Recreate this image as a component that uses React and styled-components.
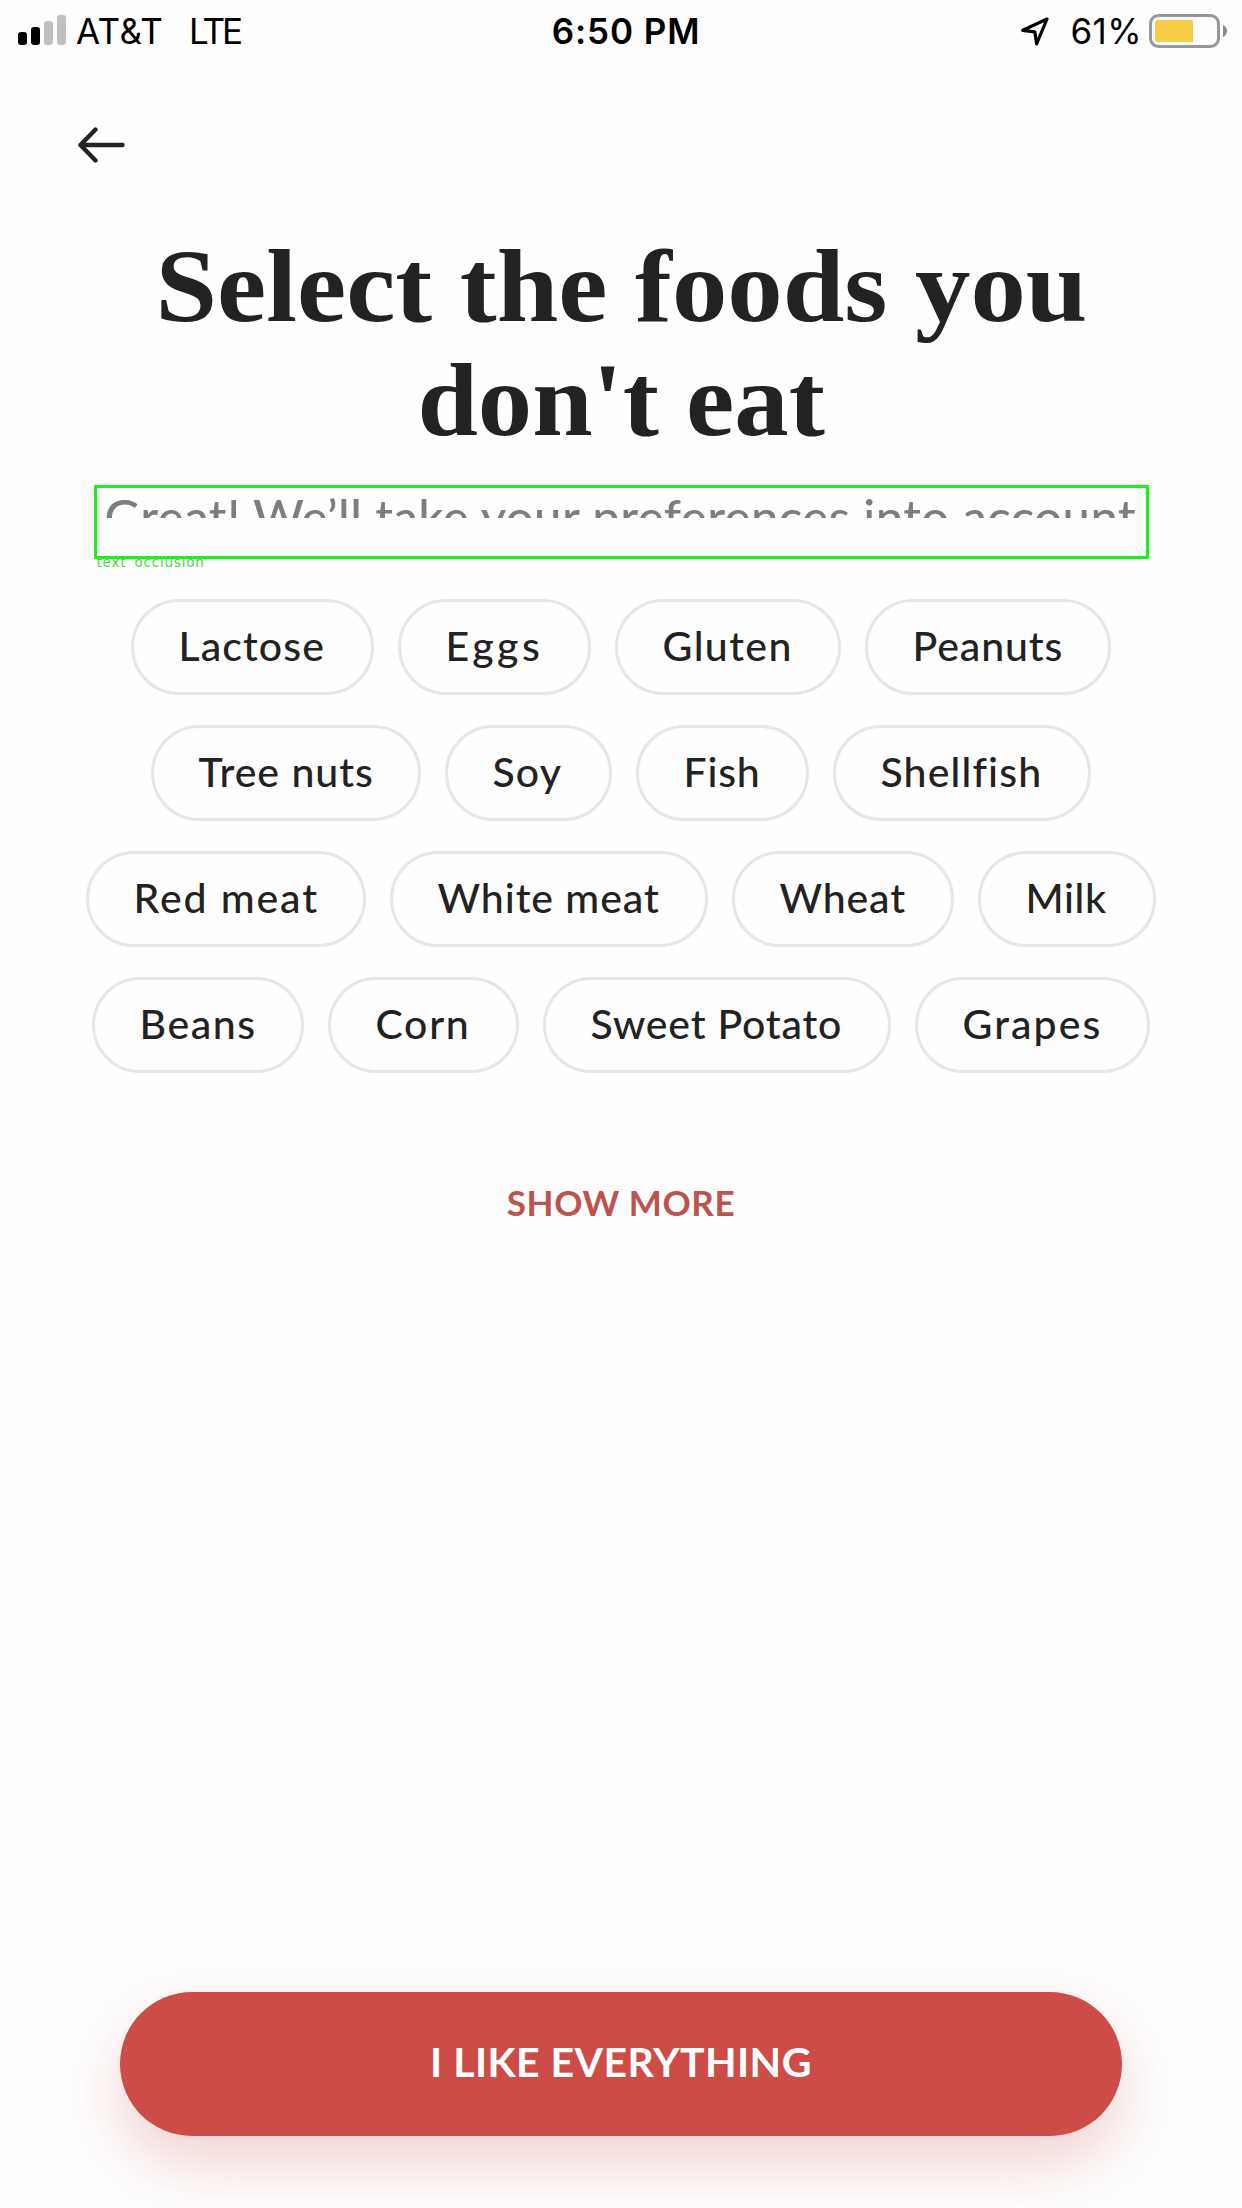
import React from 'react';
import styled, { createGlobalStyle } from 'styled-components';

const GlobalStyle = createGlobalStyle`
  *, *::before, *::after { box-sizing: border-box; }
  body { margin: 0; background: #fefefe; }
`;

const Screen = styled.div`
  display: flex;
  flex-direction: column;
  align-items: stretch;
  width: 1242px;
  height: 2208px;
  overflow: hidden;
  background: #fefefe;
  color: #222;
  font-family: Lato, 'Open Sans', sans-serif;
`;

const StatusBar = styled.header`
  display: grid;
  grid-template-columns: 1fr auto 1fr;
  align-items: center;
  height: 62px;
  padding: 0 15px 0 18px;
  color: #000;
  font: 400 35px/62px Inter, sans-serif;
`;

const StatusGroup = styled.div`
  display: flex;
  align-items: center;
  justify-content: ${(p) => (p.$end ? 'flex-end' : 'flex-start')};
`;

const Signal = styled.div`
  display: flex;
  align-items: flex-end;
  gap: 4px;
  height: 30px;
  margin: 0 10px 2px 0;
`;

const SignalBar = styled.span`
  width: 9px;
  height: ${(p) => p.$height}px;
  border-radius: 3px;
  background: ${(p) => (p.$on ? '#000' : '#bfbfbf')};
`;

const Carrier = styled.span`
  width: 113px;
  letter-spacing: 0.4px;
`;

const Network = styled.span`
  letter-spacing: -3px;
`;

const Clock = styled.time`
  padding-left: 7px;
  font-weight: 600;
  letter-spacing: 0.9px;
`;

const Percent = styled.span`
  margin: 0 7px 0 21px;
  letter-spacing: 0.4px;
`;

const Nav = styled.nav`
  display: flex;
  align-items: center;
  height: 166px;
  padding-left: 77px;
`;

const BackButton = styled.button`
  display: flex;
  padding: 0;
  border: 0;
  background: none;
  color: #222;
`;

const Title = styled.h1`
  display: flex;
  flex-direction: column;
  align-items: center;
  margin: 1px 0 0;
  font: 700 103px/114px 'Liberation Serif', serif;
`;

const TitleLine = styled.span`
  transform: scaleX(${(p) => p.$stretch});
  white-space: nowrap;
`;

const Highlight = styled.div`
  position: relative;
  width: 1055px;
  height: 74px;
  margin: 28px 0 40px 93.5px;
  border: 3px solid #1cf01f;
  border-radius: 1px;
`;

const Subtitle = styled.p`
  height: 30px;
  margin: 0;
  padding-left: 8px;
  overflow: hidden;
  color: #7d7d7d;
  font-size: 49px;
  font-weight: 500;
  line-height: 56px;
  letter-spacing: 0.45px;
  white-space: nowrap;
`;

const Tag = styled.span`
  position: absolute;
  left: 0;
  top: 66px;
  color: #3fdc3f;
  font: 400 13.5px/16px 'DejaVu Sans', sans-serif;
  letter-spacing: 0.8px;
  word-spacing: 3px;
  white-space: nowrap;
`;

const ChipList = styled.div`
  display: flex;
  flex-direction: column;
  align-items: center;
  gap: 30px;
`;

const ChipRow = styled.div`
  display: flex;
  gap: 24px;
`;

const Chip = styled.button`
  width: ${(p) => p.$width}px;
  height: 96px;
  padding: 0 0 3px 44.5px;
  border: 3px solid #e6e6e6;
  border-radius: 48px;
  background: transparent;
  color: #222;
  font: 500 41px/87px Lato, sans-serif;
  letter-spacing: ${(p) => p.$spacing}px;
  text-align: left;
  white-space: nowrap;
`;

const ShowMore = styled.button`
  align-self: center;
  height: 60px;
  margin-top: 99px;
  padding: 0;
  border: 0;
  background: none;
  color: #bd534d;
  font: 700 35px/60px Lato, sans-serif;
  letter-spacing: 0.6px;
`;

const Footer = styled.footer`
  display: flex;
  justify-content: center;
  margin-top: auto;
  padding-bottom: 72px;
`;

const PrimaryButton = styled.button`
  width: 1002px;
  height: 144px;
  padding: 0 0 4px;
  border: 0;
  border-radius: 72px;
  background: #cd4c47;
  box-shadow: 0 27px 60px rgba(205, 76, 71, 0.25);
  color: #fff;
  font: 700 41px/140px Lato, sans-serif;
  letter-spacing: 0.45px;
`;

const signal = [
  { height: 13, on: true },
  { height: 18, on: true },
  { height: 24, on: false },
  { height: 30, on: false },
];

const foods = [
  [['Lactose', 243, 1.1], ['Eggs', 193, 3.6], ['Gluten', 226, 1.4], ['Peanuts', 246, 0.9]],
  [['Tree nuts', 270, 1], ['Soy', 167, 1.15], ['Fish', 173, 0.8], ['Shellfish', 258, 1.15]],
  [['Red meat', 280, 1.9], ['White meat', 318, 0.95], ['Wheat', 222, 0.85], ['Milk', 178, 0.6]],
  [['Beans', 212, 1.6], ['Corn', 191, 1.7], ['Sweet Potato', 348, 0.8], ['Grapes', 235, 2.1]],
];

const LocationIcon = () => (
  <svg width="28" height="29" viewBox="0 0 28 29" fill="none" stroke="#000" strokeWidth="3.2" strokeLinejoin="round">
    <path d="M26 2 L1.8 13.3 L13.8 14.8 L15.6 26.8 Z" />
  </svg>
);

const BatteryIcon = () => (
  <svg width="78" height="34" viewBox="0 0 78 34">
    <rect x="1.5" y="1.5" width="68" height="31" rx="8" fill="none" stroke="#979797" strokeWidth="3" />
    <path d="M8 6 H44 V28 H8 Q6 28 6 25 V9 Q6 6 8 6 Z" fill="#f7cd46" />
    <path d="M74 11 Q78 13 78 17 Q78 21 74 23 Z" fill="#8a8a8a" />
  </svg>
);

const ArrowIcon = () => (
  <svg width="48" height="36" viewBox="0 0 48 36" fill="none" stroke="currentColor" strokeWidth="4.4" strokeLinecap="round" strokeLinejoin="round">
    <path d="M18.5 2.5 L3.5 18 L18.5 33.5 M3.5 18 H45.5" />
  </svg>
);

export default function App() {
  return (
    <Screen>
      <GlobalStyle />
      <StatusBar>
        <StatusGroup>
          <Signal>
            {signal.map((bar) => (
              <SignalBar key={bar.height} $height={bar.height} $on={bar.on} />
            ))}
          </Signal>
          <Carrier>AT&amp;T</Carrier>
          <Network>LTE</Network>
        </StatusGroup>
        <Clock>6:50 PM</Clock>
        <StatusGroup $end>
          <LocationIcon />
          <Percent>61%</Percent>
          <BatteryIcon />
        </StatusGroup>
      </StatusBar>
      <Nav>
        <BackButton aria-label="Back">
          <ArrowIcon />
        </BackButton>
      </Nav>
      <Title>
        <TitleLine $stretch={1.075}>Select the foods you</TitleLine>
        <TitleLine $stretch={1.055}>don't eat</TitleLine>
      </Title>
      <Highlight>
        <Subtitle>Great! We’ll take your preferences into account</Subtitle>
        <Tag>text occlusion</Tag>
      </Highlight>
      <ChipList>
        {foods.map((row) => (
          <ChipRow key={row[0][0]}>
            {row.map(([name, width, spacing]) => (
              <Chip key={name} $width={width} $spacing={spacing}>{name}</Chip>
            ))}
          </ChipRow>
        ))}
      </ChipList>
      <ShowMore>SHOW MORE</ShowMore>
      <Footer>
        <PrimaryButton>I LIKE EVERYTHING</PrimaryButton>
      </Footer>
    </Screen>
  );
}
